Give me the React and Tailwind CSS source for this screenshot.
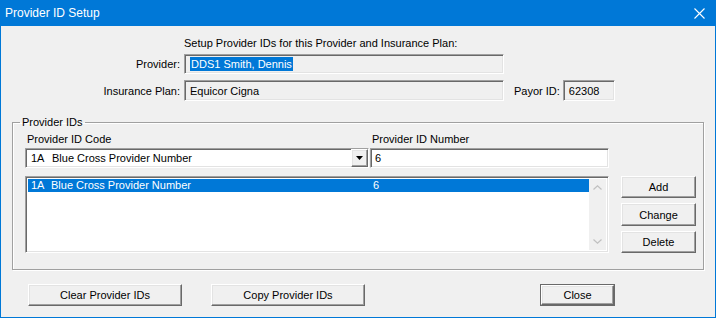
import React from 'react'

const raised =
  'bg-[#f0f0f0] border border-t-white border-l-white border-r-[#696969] border-b-[#696969] shadow-[inset_-1px_-1px_0_#a0a0a0,inset_1px_1px_0_#e3e3e3]'
const sunken =
  'border border-t-[#a0a0a0] border-l-[#a0a0a0] border-r-white border-b-white shadow-[inset_1px_1px_0_#696969,inset_-1px_-1px_0_#e3e3e3]'

const Button = ({ children, className = '' }) => (
  <button className={`${raised} flex items-center justify-center text-black ${className}`}>{children}</button>
)

const Field = ({ children, className = '' }) => (
  <div className={`${sunken} flex items-center pl-[4px] whitespace-nowrap ${className}`}>{children}</div>
)

export default function App() {
  return (
    <div
      className="w-[716px] h-[318px] bg-[#f0f0f0] border border-t-0 border-[#0078d7] flex flex-col text-[11px] leading-[14px] text-black overflow-hidden"
      style={{ fontFamily: '"Liberation Sans", Arial, sans-serif' }}
    >
      {/* Title bar */}
      <div className="h-[26px] -mx-px bg-[#0078d7] flex items-center justify-between pl-[5px] pr-[11px] text-white text-[12px]">
        <span>Provider ID Setup</span>
        <svg width="11" height="11" viewBox="0 0 11 11" stroke="white" strokeWidth="1.1">
          <path d="M0.5 0.5 L10.5 10.5 M10.5 0.5 L0.5 10.5" />
        </svg>
      </div>

      {/* Provider / plan header */}
      <div className="mt-[10px] pl-[183px]">Setup Provider IDs for this Provider and Insurance Plan:</div>

      <div className="mt-[4px] flex items-center">
        <div className="w-[183px] text-right pr-[4px]">Provider:</div>
        <Field className="w-[320px] h-[20px] bg-[#f0f0f0] !pl-[5px]">
          <span className="bg-[#0078d7] text-white px-[1px] leading-[14px]">DDS1 Smith, Dennis </span>
        </Field>
      </div>

      <div className="mt-[6px] flex items-center">
        <div className="w-[183px] text-right pr-[4px]">Insurance Plan:</div>
        <Field className="w-[320px] h-[21px] bg-[#f0f0f0] !pl-[5px]">Equicor Cigna</Field>
        <div className="ml-[10px] mr-[3px]">Payor ID:</div>
        <Field className="w-[52px] h-[21px] bg-[#f0f0f0] !pl-[5px]">62308</Field>
      </div>

      {/* Provider IDs group */}
      <fieldset className="mt-[14px] ml-[11px] w-[692px] h-[155px] border border-[#a0a0a0] shadow-[inset_1px_1px_0_#fff,1px_1px_0_#fff] pl-[12px]">
        <legend className="ml-[-5px] px-[2px]">Provider IDs</legend>
        <div className="mt-[3px] flex">
          <div className="w-[345px] pl-[2px]">Provider ID Code</div>
          <div className="pl-[2px]">Provider ID Number</div>
        </div>
        <div className="mt-[2px] flex">
          <div className={`${sunken} bg-white w-[344px] h-[20px] flex items-center`}>
            <span className="pl-[5px] w-[26px]">1A</span>
            <span className="flex-1">Blue Cross Provider Number</span>
            <div className={`${raised} w-[17px] h-[18px] flex items-center justify-center`}>
              <svg width="7" height="4" viewBox="0 0 7 4">
                <path d="M0 0 L7 0 L3.5 4 Z" fill="black" />
              </svg>
            </div>
          </div>
          <Field className="ml-[1px] w-[239px] h-[20px] bg-white !pl-[4px]">6</Field>
        </div>
        <div className="mt-[8px] flex">
          <div className={`${sunken} bg-white w-[584px] h-[77px] p-[2px] flex`}>
            <div className="flex-1">
              <div className="h-[13px] bg-[#0078d7] text-white flex items-center leading-[13px]">
                <span className="pl-[3px] w-[23px]">1A</span>
                <span className="w-[322px]">Blue Cross Provider Number</span>
                <span>6</span>
              </div>
            </div>
            <div className="w-[17px] bg-[#f0f0f0] flex flex-col items-center justify-between py-[6px]">
              <svg width="9" height="5" viewBox="0 0 9 5" fill="none" stroke="#c0c0c0" strokeWidth="1.2">
                <path d="M0.5 4.5 L4.5 0.8 L8.5 4.5" />
              </svg>
              <svg width="9" height="5" viewBox="0 0 9 5" fill="none" stroke="#c0c0c0" strokeWidth="1.2">
                <path d="M0.5 0.5 L4.5 4.2 L8.5 0.5" />
              </svg>
            </div>
          </div>
          <div className="ml-[12px] flex flex-col gap-[5px]">
            <Button className="w-[75px] h-[22px]">Add</Button>
            <Button className="w-[75px] h-[23px]">Change</Button>
            <Button className="w-[75px] h-[22px]">Delete</Button>
          </div>
        </div>
      </fieldset>

      {/* Bottom buttons */}
      <div className="mt-[14px] flex pl-[27px]">
        <Button className="w-[154px] h-[22px]">Clear Provider IDs</Button>
        <Button className="ml-[29px] w-[154px] h-[22px]">Copy Provider IDs</Button>
        <div className="ml-[175px] w-[75px] h-[22px] border border-[#696969]">
          <Button className="w-full h-full">Close</Button>
        </div>
      </div>
    </div>
  )
}
